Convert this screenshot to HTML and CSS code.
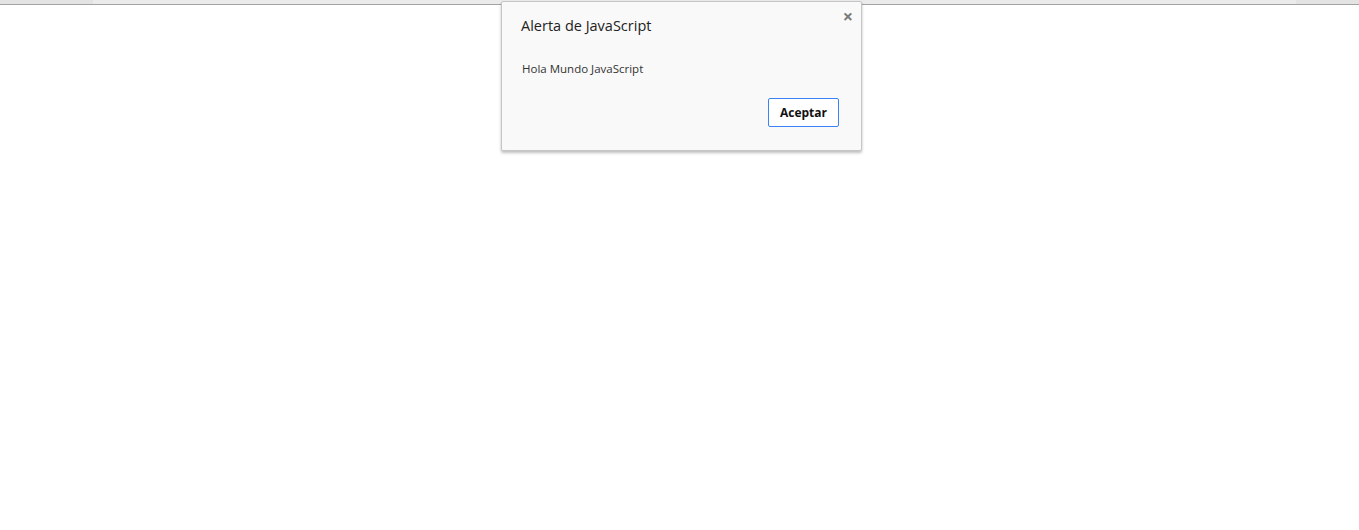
FILE: index.html
```html
<!DOCTYPE html>
<html lang="es">
<head>
<meta charset="utf-8">
<title>Alerta</title>
<link rel="stylesheet" href="styles.css">
</head>
<body>
<div class="topbar">
  <div class="seg seg-left"></div>
  <div class="seg seg-mid"></div>
  <div class="seg seg-right"></div>
</div>
<div class="dialog" role="alertdialog">
  <div class="close">×</div>
  <div class="title">Alerta de JavaScript</div>
  <div class="message">Hola Mundo JavaScript</div>
  <div class="actions">
    <button class="btn">Aceptar</button>
  </div>
</div>
</body>
</html>
```
FILE: styles.css
```css
html, body {
  margin: 0;
  padding: 0;
  background: #ffffff;
}
body {
  font-family: "Open Sans", "Noto Sans", sans-serif;
  width: 1359px;
  height: 530px;
  overflow: hidden;
  position: relative;
}
.topbar {
  display: flex;
  height: 4px;
  border-bottom: 1px solid #a3a3a3;
}
.seg { height: 100%; }
.seg-left { width: 93px; background: #e3e3e3; }
.seg-mid { flex: 1; background: #ebebeb; }
.seg-right { width: 63px; background: #e3e3e3; }
.dialog {
  position: absolute;
  left: 501px;
  top: 1px;
  width: 359px;
  height: 148px;
  background: #f9f9f9;
  border: 1px solid #c6c6c6;
  border-radius: 2px;
  box-shadow: 0 2px 3px rgba(0,0,0,0.25);
  box-sizing: content-box;
  padding: 0;
}
.close {
  position: absolute;
  right: 8px;
  top: 4px;
  font-size: 18px;
  font-weight: bold;
  color: #7a7a7a;
  line-height: 20px;
}
.title {
  margin: 14px 0 0 19px;
  font-size: 14.5px;
  color: #222;
  line-height: 20px;
}
.message {
  margin: 25px 0 0 20px;
  font-size: 11.5px;
  color: #333;
  line-height: 16px;
}
.actions {
  display: flex;
  justify-content: flex-end;
  padding-right: 22px;
  margin-top: 21px;
}
.btn {
  width: 71px;
  height: 29px;
  background: #ffffff;
  border: 1px solid #3b82f6;
  border-radius: 2px;
  font-family: "Open Sans", "Noto Sans", sans-serif;
  font-weight: bold;
  font-size: 12px;
  color: #111;
  padding: 0;
}
```
